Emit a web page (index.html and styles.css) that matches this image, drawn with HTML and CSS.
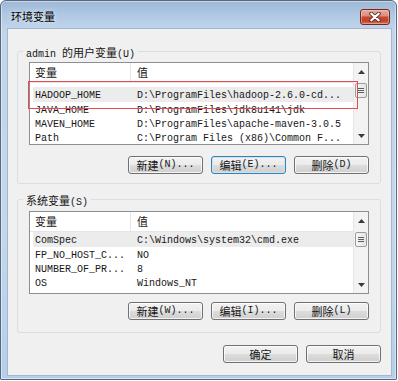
FILE: index.html
```html
<!DOCTYPE html>
<html lang="zh-CN">
<head>
<meta charset="utf-8">
<title>环境变量</title>
<link rel="stylesheet" href="styles.css">
</head>
<body>
<div class="window">
  <div class="titlebar">
    <div class="title">环境变量</div>
    <div class="close">
      <svg width="12" height="10" viewBox="0 0 12 10"><path d="M2.2 1.6 L9.8 8.4 M9.8 1.6 L2.2 8.4" stroke="#4e2620" stroke-width="3.8" stroke-linecap="round"/><path d="M2.2 1.6 L9.8 8.4 M9.8 1.6 L2.2 8.4" stroke="#ffffff" stroke-width="2.1" stroke-linecap="round"/></svg>
    </div>
  </div>
  <div class="client">
    <div class="group g1">
      <div class="group-title"><span class="gt">admin <span class="zh">的用户变量</span>(U)</span></div>
      <div class="list">
        <div class="list-main">
          <div class="list-head"><div class="c1 zh">变量</div><div class="c2 zh">值</div></div>
          <div class="row sel"><div class="c1">HADOOP_HOME</div><div class="c2">D:\ProgramFiles\hadoop-2.6.0-cd...</div></div>
          <div class="row"><div class="c1">JAVA_HOME</div><div class="c2">D:\ProgramFiles\jdk8u141\jdk</div></div>
          <div class="row"><div class="c1">MAVEN_HOME</div><div class="c2">D:\ProgramFiles\apache-maven-3.0.5</div></div>
          <div class="row"><div class="c1">Path</div><div class="c2">C:\Program Files (x86)\Common F...</div></div>
        </div>
        <div class="vscroll">
          <div class="arrow"><svg width="7" height="4" viewBox="0 0 7 4"><path d="M0 4L3.5 0 7 4z" fill="#3a3a3a"/></svg></div>
          <div class="track"><div class="thumb"><div class="grip"></div></div></div>
          <div class="arrow"><svg width="7" height="4" viewBox="0 0 7 4"><path d="M0 0L3.5 4 7 0z" fill="#3a3a3a"/></svg></div>
        </div>
        <div class="annot"></div>
      </div>
      <div class="btns">
        <div class="btn"><span class="zh">新建</span>(N)...</div>
        <div class="btn default"><span class="zh">编辑</span>(E)...</div>
        <div class="btn"><span class="zh">删除</span>(D)</div>
      </div>
    </div>

    <div class="group g2">
      <div class="group-title"><span class="gt"><span class="zh">系统变量</span>(S)</span></div>
      <div class="list">
        <div class="list-main">
          <div class="list-head"><div class="c1 zh">变量</div><div class="c2 zh">值</div></div>
          <div class="row sel"><div class="c1">ComSpec</div><div class="c2">C:\Windows\system32\cmd.exe</div></div>
          <div class="row"><div class="c1">FP_NO_HOST_C...</div><div class="c2">NO</div></div>
          <div class="row"><div class="c1">NUMBER_OF_PR...</div><div class="c2">8</div></div>
          <div class="row"><div class="c1">OS</div><div class="c2">Windows_NT</div></div>
        </div>
        <div class="vscroll">
          <div class="arrow"><svg width="7" height="4" viewBox="0 0 7 4"><path d="M0 4L3.5 0 7 4z" fill="#3a3a3a"/></svg></div>
          <div class="track"><div class="thumb"><div class="grip"></div></div></div>
          <div class="arrow"><svg width="7" height="4" viewBox="0 0 7 4"><path d="M0 0L3.5 4 7 0z" fill="#3a3a3a"/></svg></div>
        </div>
      </div>
      <div class="btns">
        <div class="btn"><span class="zh">新建</span>(W)...</div>
        <div class="btn"><span class="zh">编辑</span>(I)...</div>
        <div class="btn"><span class="zh">删除</span>(L)</div>
      </div>
    </div>

    <div class="footer">
      <div class="btn"><span class="zh">确定</span></div>
      <div class="btn"><span class="zh">取消</span></div>
    </div>
  </div>
</div>
</body>
</html>
```

FILE: styles.css
```css
* { box-sizing: border-box; }

html, body {
  margin: 0;
  padding: 0;
  background: #ffffff;
}

body {
  font-family: "Liberation Mono", "Noto Sans CJK SC", monospace;
  font-size: 10px;
  color: #161616;
}

.zh {
  font-family: "Noto Sans CJK SC", sans-serif;
  font-size: 11px;
}

.window {
  width: 397px;
  height: 380px;
  border: 1px solid #55687d;
  border-radius: 6px 6px 1px 1px;
  background: linear-gradient(180deg, #9db8d6 0px, #b0c8e3 14px, #c0d5ec 28px, #c3d8ee 60%, #b6cee9 100%);
  box-shadow: inset 0 0 0 1px rgba(255, 255, 255, 0.45);
  padding: 0 4px 3px 6px;
  display: flex;
  flex-direction: column;
}

.titlebar {
  height: 27px;
  flex: none;
  display: flex;
  justify-content: space-between;
  align-items: flex-start;
  padding: 0 2px 0 4px;
}

.title {
  margin-top: 8px;
  line-height: 15px;
  font-family: "Noto Sans CJK SC", sans-serif;
  font-size: 11px;
  color: #000;
  text-shadow: 0 0 5px rgba(255, 255, 255, 0.9);
}

.close {
  margin-top: 8px;
  width: 30px;
  height: 16px;
  border: 1px solid #6e2a22;
  border-radius: 3px;
  background: linear-gradient(180deg, #e8a99b 0%, #dc8e7e 42%, #c84833 50%, #c2412c 75%, #d36a52 100%);
  box-shadow: inset 0 0 0 1px rgba(255, 215, 205, 0.45);
  display: flex;
  align-items: center;
  justify-content: center;
}

.client {
  flex: none;
  height: 348px;
  border: 1px solid #a3b8cf;
  background: #f0f0f0;
  display: flex;
  flex-direction: column;
}

.group {
  margin: 0 10px 0 9px;
  border: 1px solid #d5dfe5;
  border-radius: 3px;
  padding: 0 11px;
}

.g1 { margin-top: 22px; padding-bottom: 9px; }
.g2 { margin-top: 15px; padding-bottom: 12px; }

.group-title {
  margin: -7px 0 3px -6px;
  height: 14px;
  line-height: 14px;
}

.g2 .group-title { margin-bottom: 4px; }

.gt {
  display: inline-block;
  height: 14px;
  line-height: 14px;
  padding: 0 3px;
  background: #f0f0f0;
}

.list {
  position: relative;
  display: flex;
  height: 83px;
  border: 1px solid #8b8e93;
  background: #ffffff;
}

.list-main {
  flex: 1;
  min-width: 0;
  overflow: hidden;
}

.list-head {
  display: flex;
  height: 20px;
  line-height: 19px;
  border-bottom: 1px solid #e5e5e5;
}

.g1 .list-head { margin-bottom: 4px; }

.list-head .c1 {
  width: 101px;
  padding-left: 5px;
  border-right: 1px solid #e5e5e5;
}

.row {
  display: flex;
  height: 14px;
  padding-top: 3px;
  line-height: 12px;
  margin-left: 3px;
  white-space: nowrap;
}

.row.sel {
  height: 15px;
  background: #ececec;
}

.c1 {
  width: 98px;
  padding-left: 2px;
  flex: none;
  overflow: hidden;
  white-space: nowrap;
}

.c2 {
  flex: 1;
  padding-left: 6px;
  overflow: hidden;
  white-space: nowrap;
}

.vscroll {
  width: 15px;
  flex: none;
  display: flex;
  flex-direction: column;
  background: #f3f3f3;
  border-left: 1px solid #e6e6e6;
}

.arrow {
  height: 17px;
  flex: none;
  display: flex;
  align-items: center;
  justify-content: center;
}

.track { flex: 1; }

.thumb {
  margin: 3px 1px 0 1px;
  height: 15px;
  border: 1px solid #9c9c9c;
  border-radius: 2px;
  background: linear-gradient(90deg, #f7f7f7, #e4e4e4);
  display: flex;
  align-items: center;
  justify-content: center;
}

.grip {
  width: 6px;
  height: 5px;
  background: repeating-linear-gradient(180deg, #5e5e5e 0 1px, transparent 1px 2px);
}

.annot {
  position: absolute;
  left: -2px;
  top: 18px;
  width: 330px;
  height: 28px;
  border: 1px solid #e8494e;
  pointer-events: none;
}

.btns {
  display: flex;
  justify-content: flex-end;
  gap: 8px;
  margin-top: 11px;
}

.g2 .btns { margin-top: 8px; }

.btn {
  width: 75px;
  height: 18px;
  border: 1px solid #707070;
  border-radius: 3px;
  background: linear-gradient(180deg, #f2f2f2 0%, #ebebeb 50%, #dddddd 50%, #cfcfcf 100%);
  box-shadow: inset 0 0 0 1px rgba(255, 255, 255, 0.75);
  display: flex;
  align-items: center;
  justify-content: center;
  line-height: 14px;
  white-space: nowrap;
}

.btn.default {
  border-color: #3c7fb1;
  box-shadow: inset 0 0 0 1px #c6e6f8;
}

.footer {
  display: flex;
  justify-content: flex-end;
  gap: 8px;
  margin: 12px 10px 0 0;
}
```
